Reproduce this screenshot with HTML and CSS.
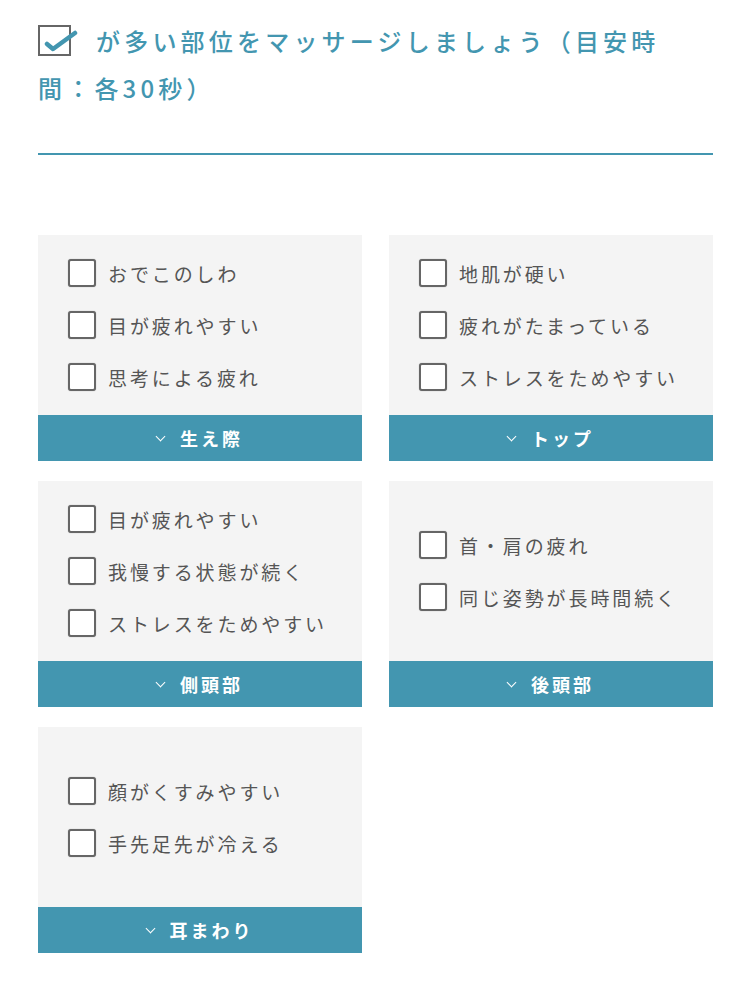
FILE: index.html
```html
<!DOCTYPE html>
<html lang="ja">
<head>
    <meta charset="UTF-8">
    <meta name="viewport" content="width=device-width, initial-scale=1.0">
    <title>マッサージチェック</title>
    <link rel="stylesheet" href="styles.css">
</head>
<body>
    <div class="page">
        <h2 class="heading">
            <span class="heading-icon">
                <svg width="40" height="36" viewBox="0 0 40 36">
                    <rect x="1" y="4" width="31" height="29" fill="#fff" stroke="#666" stroke-width="2"/>
                    <path d="M9 22 L15 27 L37 11" fill="none" stroke="#4396b0" stroke-width="4.5" stroke-linecap="round" stroke-linejoin="round"/>
                </svg>
            </span>が多い部位をマッサージしましょう（目安時間：各30秒）
        </h2>

        <div class="cards">
            <div class="card">
                <ul class="checks">
                    <li><span class="box"></span>おでこのしわ</li>
                    <li><span class="box"></span>目が疲れやすい</li>
                    <li><span class="box"></span>思考による疲れ</li>
                </ul>
                <button class="part"><span class="chev"></span>生え際</button>
            </div>
            <div class="card">
                <ul class="checks">
                    <li><span class="box"></span>地肌が硬い</li>
                    <li><span class="box"></span>疲れがたまっている</li>
                    <li><span class="box"></span>ストレスをためやすい</li>
                </ul>
                <button class="part"><span class="chev"></span>トップ</button>
            </div>
            <div class="card">
                <ul class="checks">
                    <li><span class="box"></span>目が疲れやすい</li>
                    <li><span class="box"></span>我慢する状態が続く</li>
                    <li><span class="box"></span>ストレスをためやすい</li>
                </ul>
                <button class="part"><span class="chev"></span>側頭部</button>
            </div>
            <div class="card">
                <ul class="checks">
                    <li><span class="box"></span>首・肩の疲れ</li>
                    <li><span class="box"></span>同じ姿勢が長時間続く</li>
                </ul>
                <button class="part"><span class="chev"></span>後頭部</button>
            </div>
            <div class="card">
                <ul class="checks">
                    <li><span class="box"></span>顔がくすみやすい</li>
                    <li><span class="box"></span>手先足先が冷える</li>
                </ul>
                <button class="part"><span class="chev"></span>耳まわり</button>
            </div>
        </div>
    </div>
</body>
</html>
```

FILE: styles.css
```css
* {
    margin: 0;
    padding: 0;
    box-sizing: border-box;
}

body {
    background: #fff;
    font-family: 'Noto Sans CJK JP', 'Noto Sans', sans-serif;
}

.page {
    padding: 17px 37px 30px 38px;
}

.heading {
    color: #4396b0;
    font-size: 24px;
    font-weight: 500;
    letter-spacing: 4.2px;
    line-height: 47px;
    padding-right: 20px;
    padding-bottom: 42px;
    border-bottom: 2px solid #4396b0;
}

.heading-icon {
    display: inline-block;
    width: 40px;
    height: 36px;
    margin-right: 18px;
    vertical-align: -7px;
}

.heading-icon svg {
    display: block;
}

.cards {
    margin-top: 80px;
    display: grid;
    grid-template-columns: 324px 324px;
    column-gap: 27px;
    row-gap: 20px;
}

.card {
    display: flex;
    flex-direction: column;
    background: #f4f4f4;
}

.checks {
    list-style: none;
    height: 180px;
    padding-left: 30px;
    display: flex;
    flex-direction: column;
    justify-content: center;
    gap: 24px;
}

.checks li {
    display: flex;
    align-items: center;
    height: 28px;
    font-size: 19px;
    letter-spacing: 2.9px;
    color: #555;
}

.box {
    width: 28px;
    height: 28px;
    margin-right: 12px;
    background: #fff;
    border: 2px solid #666;
    border-radius: 3px;
    box-shadow: 0 0 1px rgba(0, 0, 0, 0.4);
    flex-shrink: 0;
}

.part {
    height: 46px;
    border: none;
    background: #4396b0;
    color: #fff;
    font-family: inherit;
    font-size: 18px;
    font-weight: 700;
    letter-spacing: 3px;
    display: flex;
    align-items: center;
    justify-content: center;
    cursor: pointer;
}

.chev {
    width: 7px;
    height: 7px;
    border-right: 1.5px solid #fff;
    border-bottom: 1.5px solid #fff;
    transform: rotate(45deg);
    margin: -4px 16px 0 0;
}
```
